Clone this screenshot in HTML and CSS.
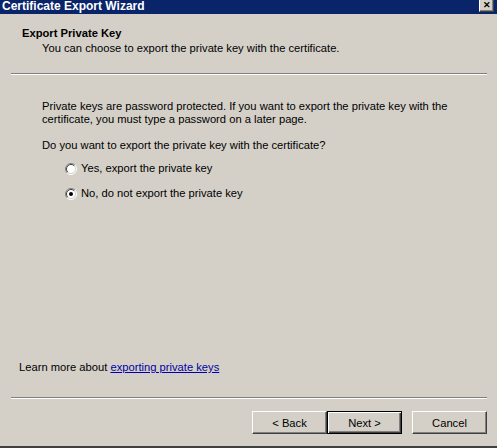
FILE: index.html
```html
<!DOCTYPE html>
<html>
<head>
<title>Certificate Export Wizard</title>
<link rel="stylesheet" href="styles.css">
</head>
<body>
<div class="window">
    <div class="titlebar">
        <span class="title">Certificate Export Wizard</span>
        <span class="close">&#x2715;</span>
    </div>
    <div class="header">
        <div class="header-title">Export Private Key</div>
        <div class="header-sub">You can choose to export the private key with the certificate.</div>
    </div>
    <div class="sep"></div>
    <div class="content">
        <p>Private keys are password protected. If you want to export the private key with the<br>certificate, you must type a password on a later page.</p>
        <p class="question">Do you want to export the private key with the certificate?</p>
        <label class="radio">
            <svg width="12" height="12" viewBox="0 0 12 12">
                <circle cx="6" cy="6" r="5" fill="#fff"/>
                <path d="M2.1 9.9 A5.5 5.5 0 0 1 9.9 2.1" fill="none" stroke="#808080"/>
                <path d="M9.9 2.1 A5.5 5.5 0 0 1 2.1 9.9" fill="none" stroke="#fff"/>
                <path d="M2.8 9.2 A4.5 4.5 0 0 1 9.2 2.8" fill="none" stroke="#404040"/>
                <path d="M9.2 2.8 A4.5 4.5 0 0 1 2.8 9.2" fill="none" stroke="#d4d0c8"/>
            </svg>
            Yes, export the private key
        </label>
        <label class="radio">
            <svg width="12" height="12" viewBox="0 0 12 12">
                <circle cx="6" cy="6" r="5" fill="#fff"/>
                <path d="M2.1 9.9 A5.5 5.5 0 0 1 9.9 2.1" fill="none" stroke="#808080"/>
                <path d="M9.9 2.1 A5.5 5.5 0 0 1 2.1 9.9" fill="none" stroke="#fff"/>
                <path d="M2.8 9.2 A4.5 4.5 0 0 1 9.2 2.8" fill="none" stroke="#404040"/>
                <path d="M9.2 2.8 A4.5 4.5 0 0 1 2.8 9.2" fill="none" stroke="#d4d0c8"/>
                <circle cx="6" cy="6" r="2" fill="#000"/>
            </svg>
            No, do not export the private key
        </label>
    </div>
    <div class="learn">Learn more about <a href="#">exporting private keys</a></div>
    <div class="sep"></div>
    <div class="buttons">
        <button class="btn">&lt; Back</button>
        <button class="btn default">Next &gt;</button>
        <button class="btn cancel">Cancel</button>
    </div>
    <div class="frame-bottom"></div>
</div>
</body>
</html>
```

FILE: styles.css
```css
html, body {
    margin: 0;
    padding: 0;
    background-color: #d4d0c8;
}
body {
    font-family: "Liberation Sans", Arial, sans-serif;
    font-size: 11.2px;
    line-height: 13px;
    color: #000;
}
.window {
    height: 448px;
    display: flex;
    flex-direction: column;
    overflow: hidden;
}
.titlebar {
    height: 14px;
    flex: none;
    background-color: #0a246a;
    display: flex;
    justify-content: space-between;
    align-items: flex-start;
    padding: 0 3px 0 2px;
}
.title {
    color: #fff;
    font-weight: bold;
    font-size: 12px;
    line-height: 13px;
}
.close {
    width: 13px;
    height: 11px;
    background-color: #d4d0c8;
    border-right: 1px solid #404040;
    border-bottom: 1px solid #404040;
    border-left: 1px solid #fff;
    box-shadow: inset -1px -1px #808080;
    font-size: 9px;
    line-height: 11px;
    text-align: center;
    font-weight: bold;
}
.header {
    padding: 13px 0 18px 22px;
}
.header-title {
    font-weight: bold;
}
.header-sub {
    margin-top: 2px;
    padding-left: 20px;
}
.sep {
    flex: none;
    margin: 0 10px 0 11px;
    border-top: 1px solid #808080;
    border-bottom: 1px solid #fff;
    height: 0;
}
.content {
    padding: 25px 0 0 42px;
    flex: 1;
}
.content p {
    margin: 0 0 13px 0;
}
.content p.question {
    margin-bottom: 10px;
}
.radio {
    display: flex;
    align-items: center;
    gap: 4px;
    margin-left: 23px;
    height: 13px;
}
.radio + .radio {
    margin-top: 12px;
}
.learn {
    padding: 0 0 23px 19px;
}
.learn a {
    color: #0000a8;
}
.buttons {
    display: flex;
    padding: 12px 10px 0 0;
    justify-content: flex-end;
    height: 35px;
    flex: none;
}
.btn {
    width: 75px;
    height: 23px;
    font-family: "Liberation Sans", Arial, sans-serif;
    font-size: 11.2px;
    color: #000;
    background-color: #d4d0c8;
    border: 1px solid;
    border-color: #fff #404040 #404040 #fff;
    box-shadow: inset -1px -1px #808080;
    padding: 0;
}
.btn.default {
    border-color: #000;
    box-shadow: inset 1px 1px #fff, inset -1px -1px #404040, inset -2px -2px #808080;
}
.btn.cancel {
    margin-left: 10px;
}
.frame-bottom {
    height: 2px;
    flex: none;
    background-color: #404040;
}
```
